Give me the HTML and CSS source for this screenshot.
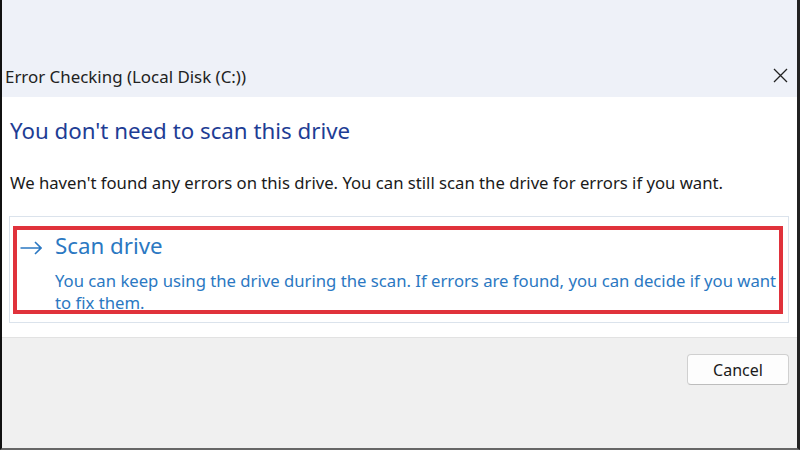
FILE: index.html
```html
<!DOCTYPE html>
<html>
<head>
    <meta charset="utf-8">
    <title>Error Checking (Local Disk (C:))</title>
    <link rel="stylesheet" href="styles.css">
</head>
<body>
    <div class="screen">
        <!-- Title bar -->
        <div class="titlebar">
            <span class="title">Error Checking (Local Disk (C:))</span>
            <span class="close">
                <svg width="15" height="15" viewBox="0 0 15 15"><path d="M1 1 L14 14 M14 1 L1 14" stroke="#222" stroke-width="1.3" fill="none"/></svg>
            </span>
        </div>

        <!-- Main content -->
        <div class="content">
            <h1 class="heading">You don't need to scan this drive</h1>
            <p class="message">We haven't found any errors on this drive. You can still scan the drive for errors if you want.</p>

            <div class="option-box">
                <div class="option">
                    <span class="arrow">
                        <svg width="22" height="14" viewBox="0 0 22 14"><path d="M0.5 7 H21 M15 1 L21 7 L15 13" stroke="#2b78c2" stroke-width="1.6" fill="none"/></svg>
                    </span>
                    <div class="option-text">
                        <div class="option-title">Scan drive</div>
                        <div class="option-desc">You can keep using the drive during the scan. If errors are found, you can decide if you want<br>to fix them.</div>
                    </div>
                </div>
            </div>
        </div>

        <!-- Footer -->
        <div class="footer">
            <button class="btn">Cancel</button>
        </div>
    </div>
</body>
</html>
```

FILE: styles.css
```css
* {
    box-sizing: border-box;
}

body {
    margin: 0;
    font-family: "Noto Sans", "Open Sans", sans-serif;
}

.screen {
    width: 800px;
    height: 450px;
    display: flex;
    flex-direction: column;
    border-left: 2px solid #111;
    border-right: 3px solid #222;
    border-bottom: 2px solid #666;
    overflow: hidden;
}

/* Title bar */
.titlebar {
    height: 97px;
    flex-shrink: 0;
    background-color: #eef1f8;
    display: flex;
    align-items: flex-end;
    justify-content: space-between;
    padding: 0 9px 8px 3px;
}

.title {
    font-size: 16.9px;
    color: #222;
    line-height: 24px;
}

.close {
    display: flex;
    margin-bottom: 6px;
}

/* Content */
.content {
    background-color: #fff;
    height: 240px;
    flex-shrink: 0;
    padding: 19px 8px 0 7px;
}

.heading {
    margin: 0;
    font-size: 22.3px;
    font-weight: normal;
    color: #1e3d95;
    line-height: 30px;
    padding-left: 1px;
}

.message {
    margin: 26px 0 0 0;
    padding-left: 1px;
    font-size: 16.7px;
    color: #1a1a1a;
    line-height: 22px;
}

.option-box {
    margin-top: 22px;
    border: 1px solid #dbe3ec;
    padding: 9px 5px 8px 3px;
}

.option {
    display: flex;
    height: 88px;
    border: 4px solid #e0323b;
    padding: 1px 0 0 3px;
}

.arrow {
    display: flex;
    padding: 10px 13px 0 0;
}

.option-title {
    font-size: 22.3px;
    color: #2b78c2;
    line-height: 30px;
}

.option-desc {
    margin-top: 9px;
    font-size: 16.7px;
    color: #2b78c2;
    line-height: 22px;
    white-space: nowrap;
}

/* Footer */
.footer {
    flex: 1;
    background-color: #f0f0f0;
    border-top: 1px solid #e2e2e2;
    display: flex;
    justify-content: flex-end;
    align-items: flex-start;
    padding: 16px 8px 0 0;
}

.btn {
    width: 102px;
    height: 31px;
    background-color: #fdfdfd;
    border: 1px solid #d0d0d0;
    border-bottom-color: #bdbdbd;
    border-radius: 4px;
    font-family: "Noto Sans", "Open Sans", sans-serif;
    font-size: 16px;
    color: #1a1a1a;
}
```
